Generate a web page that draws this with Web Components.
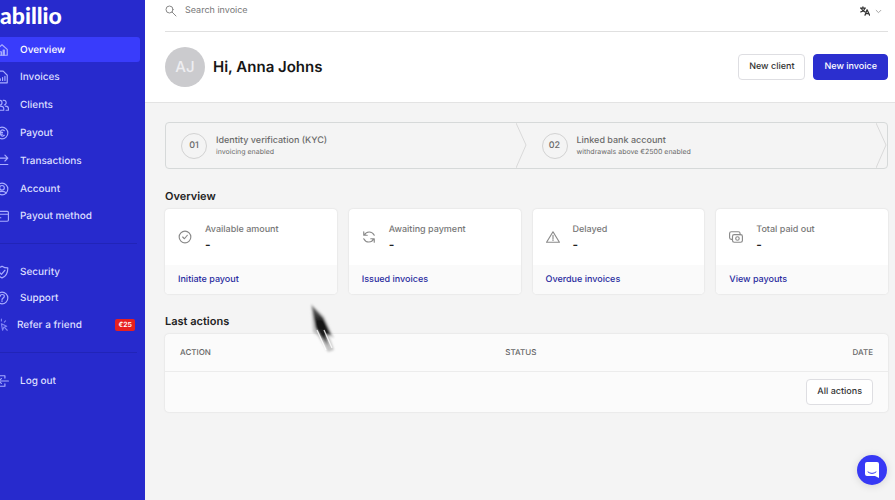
<!DOCTYPE html>
<html lang="en">
<head>
<meta charset="utf-8">
<title>abillio – Overview</title>
<style>
html, body { margin: 0; min-height: 100%; background: #f4f4f4; }
body { font-family: Inter, "Liberation Sans", sans-serif; font-size: 9px; line-height: 16px; color: #222; text-rendering: geometricPrecision; }
</style>
</head>
<body>
<app-shell>
  <side-bar slot="side">
    <nav-item slot="main" icon="home" active>Overview</nav-item>
    <nav-item slot="main" icon="invoice">Invoices</nav-item>
    <nav-item slot="main" icon="clients">Clients</nav-item>
    <nav-item slot="main" icon="euro">Payout</nav-item>
    <nav-item slot="main" icon="transfer">Transactions</nav-item>
    <nav-item slot="main" icon="account">Account</nav-item>
    <nav-item slot="main" icon="card">Payout method</nav-item>
    <nav-item slot="help" icon="shield">Security</nav-item>
    <nav-item slot="help" icon="question">Support</nav-item>
    <nav-item slot="help" icon="spark" compact>Refer a friend<count-badge slot="badge">€25</count-badge></nav-item>
    <nav-item slot="exit" icon="logout">Log out</nav-item>
  </side-bar>
  <top-bar slot="header"></top-bar>
  <welcome-bar slot="header" initials="AJ" name="Anna Johns">
    <ui-button>New client</ui-button>
    <ui-button primary>New invoice</ui-button>
  </welcome-bar>
  <step-bar>
    <step-item number="01" name="Identity verification (KYC)">invoicing enabled</step-item>
    <step-item number="02" name="Linked bank account">withdrawals above €2500 enabled</step-item>
  </step-bar>
  <page-section name="Overview">
    <card-grid>
      <stat-card icon="check" name="Available amount" action="Initiate payout">-</stat-card>
      <stat-card icon="refresh" name="Awaiting payment" action="Issued invoices">-</stat-card>
      <stat-card icon="warning" name="Delayed" action="Overdue invoices">-</stat-card>
      <stat-card icon="money" name="Total paid out" action="View payouts">-</stat-card>
    </card-grid>
  </page-section>
  <page-section name="Last actions">
    <actions-table></actions-table>
  </page-section>
</app-shell>
<chat-launcher></chat-launcher>
<moving-pointer></moving-pointer>

<script>
const define = (name, render) => customElements.define(name, class extends HTMLElement {
  connectedCallback() {
    if (this.shadowRoot) return;
    const t = document.createElement('template');
    t.innerHTML = '<style>:host,*{box-sizing:border-box}</style>' + render(this);
    this.attachShadow({ mode: 'open' }).append(t.content.cloneNode(true));
  }
});
const attr = (el, n) => el.getAttribute(n) || '';

const icons = {
  home: '<path d="M3 11 12 3l9 8v10H3z"/><path d="M8 21v-6h3v6m3 0v-9h2v9"/>',
  invoice: '<path d="M4 2h10l7 7v13H4z"/><path d="M9 18v-3m4 3v-5m4 5v-7"/>',
  clients: '<circle cx="8" cy="8" r="4"/><path d="M1 21v-3c0-3 3-4 7-4s7 1 7 4v3zM14 4a4 4 0 1 1 2 8m2 2c3 0 5 2 5 4v3h-4"/>',
  euro: '<circle cx="12" cy="12" r="10"/><path d="M16 8c-4-3-7 0-7 4s3 7 7 4M7 11h6m-6 3h6"/>',
  transfer: '<path d="M2 7h20m-5-5 5 5-5 5M22 18H3"/>',
  account: '<circle cx="12" cy="12" r="10"/><circle cx="12" cy="10" r="4"/><path d="M5 19c2-4 12-4 14 0"/>',
  card: '<rect x="1" y="4" width="22" height="17" rx="2"/><path d="M1 9h22M6 15h4"/>',
  shield: '<path d="M12 2c3 2 6 3 10 3 0 9-2 14-10 17C4 19 2 14 2 5c4 0 7-1 10-3z"/><path d="m7 12 4 4 6-7"/>',
  question: '<circle cx="12" cy="12" r="10"/><path d="M9 9c0-4 7-4 7 0 0 3-4 3-4 6m0 2v1"/>',
  spark: '<path d="m11 10 9 4-5 2-2 5zM11 5V2M6 7 4 5m2 7H2m5 4-2 2m11-11 2-2m-1 12 4 4"/>',
  logout: '<path d="M17 7V3H5v5m0 8v5h12v-4M23 12H6m5-4-5 4 5 4"/>',
  search: '<circle cx="9" cy="9" r="7"/><path d="m14 14 8 8"/>',
  chevron: '<path d="m4 8 8 8 8-8"/>',
  translate: '<path d="M1 5h12M7 2v3m4 0c0 4-4 8-9 9M4 7c1 4 4 6 8 7m0 8 5-13 6 13m-9-4h7"/>',
  check: '<circle cx="12" cy="12" r="10"/><path d="m8 12 3 3 5-6"/>',
  refresh: '<path d="M3 3v6h6M4 9c3-7 13-8 17 0M21 21v-6h-6m5 0c-3 7-13 8-17 0"/>',
  warning: '<path d="M12 3 1 21h22zM12 9v6m0 2v1"/>',
  money: '<path d="M6 16H4a3 3 0 0 1-3-3V6a3 3 0 0 1 3-3h12a3 3 0 0 1 3 3v2"/><rect x="6" y="8" width="17" height="13" rx="3"/><circle cx="14.500" cy="14.500" r="3"/>'
};
define('app-icon', el => `
<style>:host{display:block;flex:none;width:14px;height:14px}svg{display:block;width:100%;height:100%;fill:none;stroke:currentColor;stroke-width:var(--stroke,2);stroke-linecap:round;stroke-linejoin:round}</style>
<svg viewBox="0 0 24 24" aria-hidden="true">${icons[attr(el, 'name')]}</svg>`);

define('app-shell', () => `
<style>
:host{display:grid;grid-template-columns:145px 1fr;min-height:100vh}
.top{background:#fff;border-bottom:1px solid #e3e3e3;padding:0 7px 0 20px}
main{padding:19px 7px 20px 20px;display:flex;flex-direction:column;gap:19px}
</style>
<slot name="side"></slot>
<div><header class="top"><slot name="header"></slot></header><main><slot></slot></main></div>`);

define('side-bar', () => `
<style>
:host{display:block;background:#272acd;color:#dcdfff;overflow:hidden;font-size:10px}
.inner{margin-left:-5px;display:flex;flex-direction:column}
.logo{font:900 23px/30px Lato,sans-serif;color:#fff;text-decoration:none;align-self:flex-start;margin-left:5px}
nav{display:flex;flex-direction:column;justify-content:space-between}
.main{height:192px;margin-top:7px}
.help{height:78px;margin-top:15px}
hr{border:0;border-top:1px solid #2124b8;height:0;margin:14px 8px 0 0;width:calc(100% - 8px)}
.help + hr{margin-top:15px}
.exit{margin-top:15px}
</style>
<div class="inner">
<a class="logo" href="#">abillio</a>
<nav class="main" aria-label="Main"><slot name="main"></slot></nav><hr>
<nav class="help" aria-label="Help"><slot name="help"></slot></nav><hr>
<nav class="exit" aria-label="Session"><slot name="exit"></slot></nav>
</div>`);

define('nav-item', el => `
<style>
:host{display:block;margin-right:5px}
:host([compact]) a{gap:8px}
a{display:flex;align-items:center;gap:11px;height:25px;border-radius:0 3px 3px 0;color:inherit;text-decoration:none;font-weight:500}
:host([active]) a{background:#393cfb;color:#fff}
app-icon{color:#a8acff}
:host([compact]) app-icon{color:#8084f5}
::slotted(count-badge){margin-left:auto;margin-right:5px}
</style>
<a href="#" ${el.hasAttribute('active') ? 'aria-current="page"' : ''}><app-icon name="${attr(el, 'icon')}"></app-icon><span><slot></slot></span><slot name="badge"></slot></a>`);

define('count-badge', () => `
<style>:host{display:block;background:#e8201f;color:#fff;border-radius:2px;padding:0 3px;font-size:7px;line-height:12px;font-weight:600}</style><slot></slot>`);

define('top-bar', () => `
<style>
:host{display:flex;align-items:center;justify-content:space-between;height:32px;padding-bottom:9px;border-bottom:1px solid #e0e0e0}
label{display:flex;align-items:center;gap:8px;flex:1;color:#888}
label app-icon{width:12px;height:12px}
input{border:0;outline:0;padding:0;background:none;font:inherit;color:#333;flex:1;text-rendering:inherit}
input::placeholder{color:#777;opacity:1}
button{display:flex;align-items:center;gap:5px;border:0;background:none;padding:0;margin-right:6px;color:#333}
button app-icon{width:10px;height:10px;--stroke:3}
button app-icon + app-icon{width:7px;height:7px;color:#999}
</style>
<label><app-icon name="search"></app-icon><input type="search" placeholder="Search invoice" aria-label="Search invoice"></label>
<button type="button" aria-label="Language"><app-icon name="translate"></app-icon><app-icon name="chevron"></app-icon></button>`);

define('welcome-bar', el => `
<style>
:host{display:flex;align-items:center;gap:8px;padding:15px 0}
.avatar{width:40px;height:40px;border-radius:50%;background:#cbcbce;color:#eeeef1;display:grid;place-items:center;font-size:15px;font-weight:500}
h1{margin:0 auto 0 0;font-size:15px;line-height:20px;font-weight:600;color:#161616}
</style>
<div class="avatar">${attr(el, 'initials')}</div><h1>Hi, ${attr(el, 'name')}</h1><slot></slot>`);

define('ui-button', () => `
<style>
:host{display:block}
button{display:block;height:26px;padding:0 10px;border:1px solid #dedee2;border-radius:4px;background:#fff;color:#333;font:500 9px/16px Inter,"Liberation Sans",sans-serif;text-rendering:inherit;white-space:nowrap}
:host([primary]) button{background:#2b2fcf;border-color:#2b2fcf;color:#fff}
</style><button type="button"><slot></slot></button>`);

define('step-bar', () => `
<style>:host{display:flex;border:1px solid #d6d9d9;border-radius:4px;height:47px}::slotted(*){flex:1}</style><slot></slot>`);

define('step-item', el => `
<style>
:host{display:flex;align-items:center;gap:9px;padding-left:15px;color:#6b6b6b}
.num{width:26px;height:26px;border:1px solid #d2d2d2;border-radius:50%;display:grid;place-items:center;font-weight:500}
.name{font-weight:500;line-height:12px}
.note{font-size:7px;line-height:10px}
svg{width:11px;height:100%;margin-left:auto;fill:none;stroke:#d9d9d9}
</style>
<div class="num">${attr(el, 'number')}</div>
<div><div class="name">${attr(el, 'name')}</div><div class="note"><slot></slot></div></div>
<svg viewBox="0 0 11 45" preserveAspectRatio="none" aria-hidden="true"><path d="M0 0 10 22 0 45"/></svg>`);

define('page-section', el => `
<style>:host{display:block}h2{margin:0 0 5px;font-size:11px;line-height:16px;font-weight:600;color:#222}</style>
<h2>${attr(el, 'name')}</h2><slot></slot>`);

define('card-grid', () => `
<style>:host{display:grid;grid-template-columns:repeat(4,1fr);gap:12px}</style><slot></slot>`);

define('stat-card', el => `
<style>
:host{display:block;background:#fff;border-radius:4px;box-shadow:0 0 2px #0002;overflow:hidden}
.body{display:flex;align-items:center;gap:13px;height:56px;padding:0 13px}
app-icon{color:#8b8b8b}
.name{font-weight:500;color:#777;line-height:15px}
.value{font-size:12px;font-weight:600;line-height:16px}
.foot{background:#fafafa;padding:7px 13px 6px}
a{color:#292b9f;font-weight:500;text-decoration:none}
</style>
<div class="body"><app-icon name="${attr(el, 'icon')}"></app-icon><div><div class="name">${attr(el, 'name')}</div><div class="value"><slot></slot></div></div></div>
<div class="foot"><a href="#">${attr(el, 'action')}</a></div>`);

define('actions-table', () => `
<style>
:host{display:block;background:#fbfbfb;border-radius:4px;box-shadow:0 0 2px #0002}
table{width:100%;border-collapse:collapse;table-layout:fixed}
th{height:37px;padding:0 15px;text-align:left;font-size:8px;font-weight:500;color:#666}
thead{border-bottom:1px solid #ececec}
th:first-child{width:45%}
th:last-child{text-align:right}
td{padding:7px 15px}
ui-button{float:right}
</style>
<table><thead><tr><th scope="col">ACTION</th><th scope="col">STATUS</th><th scope="col">DATE</th></tr></thead>
<tbody><tr><td colspan="3"><ui-button>All actions</ui-button></td></tr></tbody></table>`);

define('chat-launcher', () => `
<style>
:host{position:fixed;right:8px;bottom:15px}
button{display:grid;place-items:center;width:30px;height:30px;padding:0;border:0;border-radius:50%;background:#3739f5;box-shadow:0 1px 8px #0002}
svg{width:14px;height:16px;display:block}
</style>
<button type="button" aria-label="Open chat"><svg viewBox="0 0 14 16"><path d="M2 0h10q2 0 2 2v14l-4-2H2q-2 0-2-2V2q0-2 2-2z" fill="#fff"/><path d="M3 10q4 3 8 0" fill="none" stroke="#3739f5" stroke-linecap="round"/></svg></button>`);

define('moving-pointer', () => `
<style>:host{position:absolute;left:304px;top:296px;pointer-events:none}svg{display:block}</style>
<svg width="36" height="62" viewBox="0 0 36 62" aria-hidden="true">
<defs><filter id="b" x="-30%" y="-30%" width="160%" height="160%"><feGaussianBlur stdDeviation="1.2"/></filter>
<linearGradient id="g" x1="0" y1="0" x2="0" y2="1"><stop offset="0" stop-color="#777"/><stop offset=".4" stop-color="#111"/><stop offset=".7" stop-color="#222"/><stop offset="1" stop-color="#999" stop-opacity=".4"/></linearGradient></defs>
<g filter="url(#b)"><path d="M7 8 20 20 30 42 25 40 30 54 24 56 14 40 9 36z" fill="#999" opacity=".55"/>
<path d="M8 10 19 22 27 39 22 38 25 52 18 42 12 32z" fill="url(#g)"/></g>
<path d="m13 34 9 20m-2-20 8 18" stroke="#fff" stroke-width="1.300" opacity=".8" fill="none"/></svg>`);
</script>
</body>
</html>
